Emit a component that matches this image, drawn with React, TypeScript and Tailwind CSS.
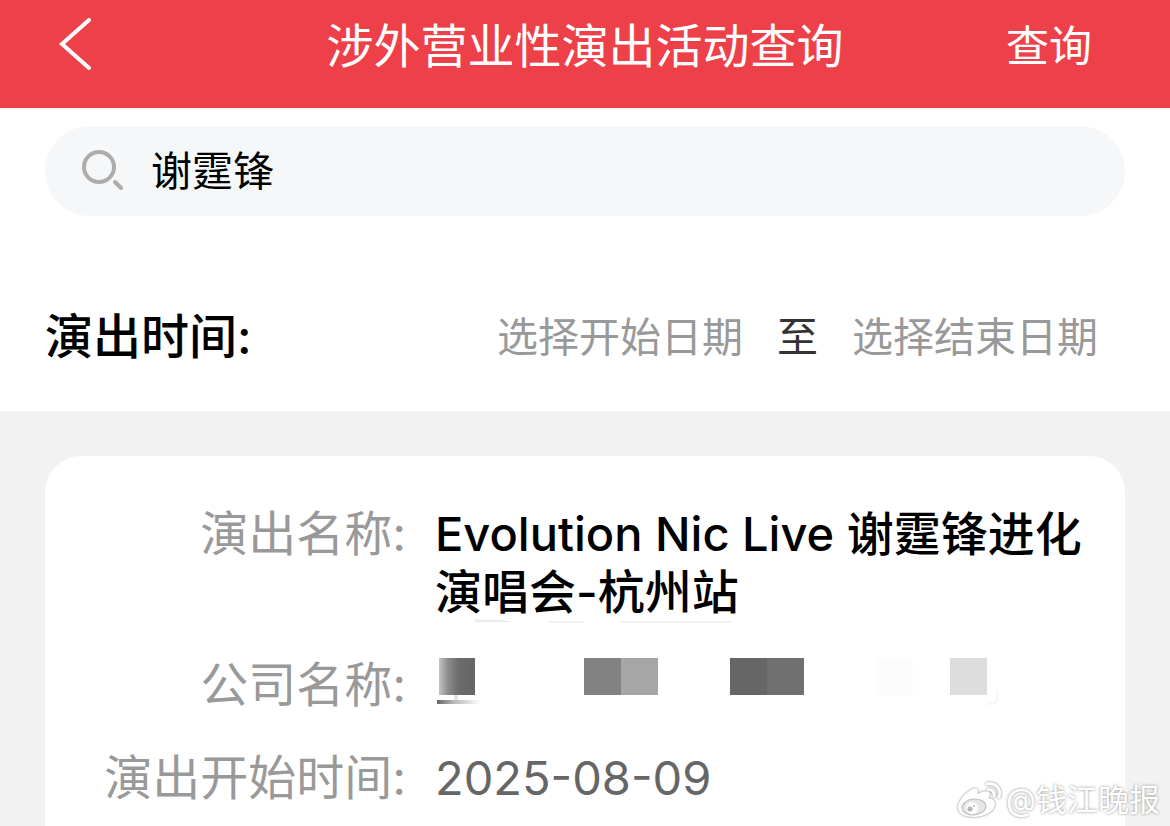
import React from "react";

/* --- SUB-COMPONENT: RESULT ROW --- */
const ResultRow = ({ label, children }: { label: string; children: React.ReactNode }) => {
  return (
    <div className="grid grid-cols-[361px_minmax(0,1fr)] gap-x-[29px]">
      <dt className="text-right text-[48px] text-[#999999]">{label}:</dt>
      <dd>{children}</dd>
    </div>
  );
};

/* --- SUB-COMPONENT: MASKED COMPANY NAME --- */
const MaskedName = () => {
  const blocks = [
    { x: 149, color: "#828282" },
    { x: 186, color: "#a6a6a6" },
    { x: 295, color: "#666666" },
    { x: 332, color: "#707070" },
    { x: 441, color: "#fcfcfc" },
    { x: 515, color: "#dddddd" },
  ];

  return (
    <svg className="block h-[58px] w-[570px] overflow-visible" viewBox="0 0 570 58" role="img" aria-label="公司名称已打码">
      <defs>
        <linearGradient id="edge" x1="0" x2="1" y1="0" y2="0">
          <stop offset="0" stopColor="#c4c4c4" />
          <stop offset="0.25" stopColor="#8c8c8c" />
          <stop offset="0.55" stopColor="#6b6b6b" />
          <stop offset="1" stopColor="#666666" />
        </linearGradient>
        <linearGradient id="line" x1="0" x2="1" y1="0" y2="0">
          <stop offset="0" stopColor="#666666" />
          <stop offset="0.4" stopColor="#bbbbbb" />
          <stop offset="1" stopColor="#ffffff" />
        </linearGradient>
        <linearGradient id="smear" x1="0" x2="0" y1="0" y2="1">
          <stop offset="0" stopColor="#ffffff" />
          <stop offset="1" stopColor="#e4e4e4" />
        </linearGradient>
      </defs>
      {/* Leftover smears above the blocks */}
      <path d="M40 -38 Q62 -38 77 -34 H40 Z" fill="url(#smear)" />
      <path d="M113 -35 h36 v2 h-36 z M186 -35 h110 v2 h-110 z" fill="#f2f2f2" />
      <rect x="4" y="2" width="36" height="37" fill="url(#edge)" />
      <rect x="19" y="39" width="4" height="6" fill="#e4e4e4" />
      <rect x="2" y="44" width="44" height="4" fill="url(#line)" />
      {blocks.map((block) => (
        <rect key={block.x} x={block.x} y="2" width="37" height="37" fill={block.color} />
      ))}
      <path d="M562 34 v10 q0 4 -9 4" fill="none" stroke="#f6f6f6" strokeWidth="2" />
    </svg>
  );
};

/* --- SUB-COMPONENT: WEIBO LOGO --- */
const WeiboLogo = () => {
  return (
    <svg className="h-9 w-11 overflow-visible drop-shadow-[0_0_1px_#777777]" viewBox="0 0 44 36" fill="none" aria-hidden="true">
      <path
        d="M0 26 C0 20 5 13 11 9 C15 6 20 5 20 9 C20 10 20 11 19 12 C23 10 28 8 31 10 C33 12 31 14 31 16 C35 17 37 19 37 22 C37 29 27 35 16 35 C7 35 0 32 0 26 Z"
        fill="white"
      />
      <ellipse cx="16" cy="25" rx="12" ry="8" transform="rotate(-6 16 25)" fill="#e6e6e6" stroke="#bbbbbb" strokeWidth="1" />
      <circle cx="14" cy="26" r="6" fill="white" />
      <circle cx="12" cy="27" r="2.5" fill="#b4b4b4" />
      <circle cx="16" cy="24" r="1" fill="#b4b4b4" />
      <path d="M29 2 C37 0 44 7 41 15" stroke="white" strokeWidth="3" strokeLinecap="round" />
      <path d="M30 8 C34 7 37 10 36 14" stroke="white" strokeWidth="3" strokeLinecap="round" />
    </svg>
  );
};

/* --- MAIN COMPONENT: PerformanceQuery --- */
const PerformanceQuery = () => {
  return (
    <div className="relative flex min-h-screen w-full flex-col bg-[#f2f2f2] font-['Inter','Noto_Sans_CJK_SC',sans-serif] text-black" lang="zh-CN">
      {/* Header Bar */}
      <header className="grid h-[108px] grid-cols-[1fr_auto_1fr] items-center bg-[#ee4049] px-[58px] pb-4 text-white">
        <button type="button" aria-label="返回" className="w-9">
          <svg className="block h-14 w-9" viewBox="0 0 36 56" fill="none" stroke="currentColor" strokeWidth="4">
            <path d="M31 2 L4 26 L31 50" strokeLinecap="round" strokeLinejoin="miter" />
          </svg>
        </button>
        <h1 className="text-[47px] leading-[58px]">涉外营业性演出活动查询</h1>
        <button type="button" className="justify-self-end pr-5 text-[43px] leading-[58px]">查询</button>
      </header>

      {/* Search + Date Filter */}
      <section className="border-t-2 border-[#fafafa] bg-white px-[45px] pt-4 pb-[45px]">
        <label className="flex h-[90px] items-center gap-[26px] rounded-[45px] bg-[#f5f7f9] px-9">
          <svg className="h-11 w-11 shrink-0" viewBox="0 0 44 44" fill="none" stroke="#adadad" strokeWidth="4" strokeLinecap="round">
            <circle cx="18" cy="18" r="15" />
            <path d="M34 33 L40 39" />
          </svg>
          <input
            type="text"
            aria-label="搜索"
            defaultValue="谢霆锋"
            className="min-w-0 flex-1 bg-transparent text-[41px] leading-[58px] outline-none"
          />
        </label>

        <div className="mt-[92px] flex items-center justify-between pr-[27px] text-[41px] leading-[58px]">
          <h2 className="text-[48px] font-medium">演出时间:</h2>
          <div className="flex gap-[34px]">
            <button type="button" className="text-[#999999]">选择开始日期</button>
            <span className="text-[#333333]">至</span>
            <button type="button" className="text-[#999999]">选择结束日期</button>
          </div>
        </div>
      </section>

      {/* Result Card */}
      <main className="flex flex-1 flex-col px-[45px] pt-[45px]">
        <dl className="flex flex-1 flex-col gap-[35px] rounded-t-[36px] bg-white pt-[49px] pr-8 text-[47px] leading-[58px]">
          <ResultRow label="演出名称">
            <span className="font-medium">Evolution Nic Live 谢霆锋进化演唱会-杭州站</span>
          </ResultRow>
          <ResultRow label="公司名称">
            <MaskedName />
          </ResultRow>
          <ResultRow label="演出开始时间">
            <time className="text-[#666666]">2025-08-09</time>
          </ResultRow>
        </dl>
      </main>

      {/* Watermark */}
      <div className="absolute right-2.5 bottom-1.5 flex items-center text-white">
        <WeiboLogo />
        <span className="pl-1 text-[31px] leading-10 [text-shadow:0_0_3px_#888888]">@钱江晚报</span>
      </div>
    </div>
  );
};

export default PerformanceQuery;
